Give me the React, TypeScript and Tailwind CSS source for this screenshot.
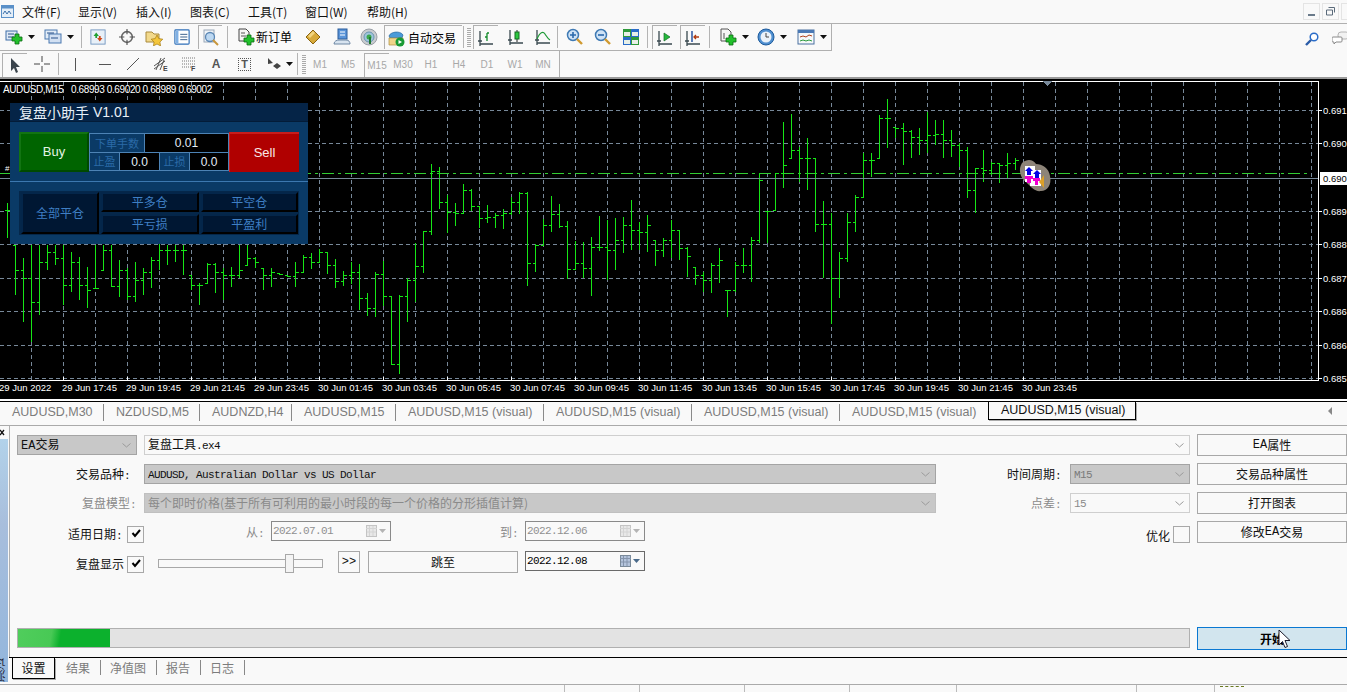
import React from 'react';

const SANS = "font-['Noto_Sans_CJK_SC','Liberation_Sans',sans-serif]";

// [high, low, close], y in page pixels, one bar every 8px from x=7
const bars: number[][] = [
  [203, 238, 210], [245, 295, 270], [258, 322, 278], [245, 342, 302], [245, 315, 262], [245, 270, 252], [245, 265, 258], [245, 305, 285],
  [252, 292, 262], [257, 300, 285], [267, 308, 290], [245, 288, 288], [245, 270, 250], [245, 287, 286], [260, 297, 270], [268, 300, 296],
  [262, 302, 280], [268, 295, 272], [257, 288, 260], [242, 270, 250], [245, 265, 250], [245, 262, 250], [245, 275, 250], [275, 290, 285],
  [283, 305, 285], [263, 283, 264], [263, 293, 272], [268, 300, 275], [267, 287, 275], [245, 278, 270], [245, 265, 258], [257, 268, 262],
  [268, 290, 275], [268, 287, 272], [273, 275, 274], [275, 277, 276], [262, 287, 272],
  [255, 273, 257], [253, 269, 262], [249, 263, 252], [252, 274, 265], [259, 288, 281], [271, 286, 275], [262, 284, 272], [264, 310, 298],
  [293, 316, 308], [272, 317, 274], [261, 306, 296], [296, 365, 364], [295, 374, 296], [278, 322, 280], [243, 302, 266], [231, 273, 231],
  [164, 235, 171], [167, 209, 202], [195, 233, 212], [203, 226, 213], [184, 213, 190], [189, 211, 206], [206, 228, 218], [205, 223, 217],
  [213, 228, 215], [209, 229, 213], [197, 215, 202], [192, 214, 193], [192, 286, 263], [244, 272, 245], [219, 246, 225], [196, 232, 214],
  [204, 228, 226], [221, 279, 269], [241, 269, 263], [242, 278, 268], [237, 296, 247], [216, 251, 247],
  [220, 280, 250], [218, 270, 240], [217, 253, 225], [200, 250, 230], [222, 250, 232], [215, 252, 225], [240, 266, 250], [238, 257, 240],
  [220, 258, 230], [230, 260, 248], [247, 277, 256], [267, 285, 275], [272, 292, 280], [263, 293, 265], [248, 283, 260], [290, 317, 290],
  [262, 292, 265], [248, 273, 265], [237, 282, 240], [173, 243, 180], [211, 243, 211], [173, 210, 173], [122, 188, 165], [114, 158, 150],
  [147, 182, 158], [138, 190, 158], [158, 232, 224], [201, 278, 224], [213, 324, 278], [252, 298, 258], [213, 262, 222], [195, 232, 197],
  [153, 198, 160], [153, 177, 160], [115, 158, 118], [99, 148, 118], [127, 138, 128], [123, 165, 131], [130, 158, 137], [128, 155, 140],
  [112, 153, 135], [120, 145, 134], [120, 158, 140], [130, 157, 145], [143, 167, 150], [147, 198, 190], [168, 213, 168], [150, 182, 170],
  [162, 175, 163], [163, 183, 165], [153, 178, 163], [158, 170, 160],
];

const barPath = bars
  .map(([hi, lo, close], i) => {
    const x = 7.5 + i * 8;
    const prev = i > 0 ? bars[i - 1][2] : close;
    const open = Math.min(lo, Math.max(hi, prev));
    return `M${x} ${hi}V${lo}M${x - 3} ${open + 0.5}H${x}M${x} ${close + 0.5}H${x + 3}`;
  })
  .join('');

const gridY = [110, 143, 211, 244, 278, 311, 345, 378];
const gridX = Array.from({ length: 41 }, (_, i) => 31 + i * 32);
const prices = [
  ['0.691', 110], ['0.690', 143], ['0.689', 211], ['0.688', 244], ['0.687', 278], ['0.686', 311], ['0.686', 345], ['0.685', 378],
] as const;

const timeLabels = Array.from({ length: 16 }, (_, i) => {
  const mins = 17 * 60 + 45 + i * 120;
  const day = mins >= 1440 ? '30' : '29';
  const h = Math.floor(mins / 60) % 24;
  return { x: 62 + i * 64, text: `${day} Jun ${String(h).padStart(2, '0')}:45` };
});

const Chart = () => (
  <svg width="1347" height="320" viewBox="0 79 1347 320" className="block" shapeRendering="crispEdges">
    <rect x="0" y="79" width="1347" height="320" fill="#000" />
    {gridX.map((x) => (
      <path key={x} d={`M${x + 0.5} 82V380`} stroke="#778899" strokeDasharray="4 3" />
    ))}
    {gridY.map((y) => (
      <path key={y} d={`M0 ${y + 0.5}H1318`} stroke="#778899" strokeDasharray="4 3" />
    ))}
    <path d="M0 173.5H1311" stroke="#32cd32" strokeDasharray="12 4 3 4" />
    <path d={barPath} stroke="#16e616" fill="none" />
    <path d="M0 178.5H1318" stroke="#778899" />
    <path d="M0 81.5H1318.5V380.5H0" stroke="#fff" fill="none" />
    <path d="M1043 81h9l-4.500 5z" fill="#778899" />
    {prices.map(([label, y]) => (
      <g key={y}>
        <path d={`M1319 ${y + 0.5}h3`} stroke="#fff" />
        <text x="1323" y={y + 4} fill="#fff" fontSize="9.500" fontFamily="Liberation Sans">{label}</text>
      </g>
    ))}
    <rect x="1320" y="172" width="27" height="13" fill="#fff" />
    <text x="1323" y="182" fill="#000" fontSize="9.500" fontFamily="Liberation Sans">0.690</text>
    <text x="3" y="93" fill="#fff" fontSize="10" letterSpacing="-0.4" fontFamily="Liberation Sans">AUDUSD,M15</text>
    <text x="71" y="93" fill="#fff" fontSize="10" letterSpacing="-0.39" fontFamily="Liberation Sans">0.68993 0.69020 0.68989 0.69002</text>
    <text x="5" y="171" fill="#fff" fontSize="8" fontFamily="Liberation Sans">#</text>
    <text x="-1" y="391" fill="#fff" fontSize="9.500" fontFamily="Liberation Sans">29 Jun 2022</text>
    {timeLabels.map((t) => (
      <g key={t.x}>
        <path d={`M${t.x + 1.5} 377v4`} stroke="#fff" />
        <text x={t.x} y="391" fill="#fff" fontSize="9.500" fontFamily="Liberation Sans">{t.text}</text>
      </g>
    ))}
    {/* tester arrow marker, last bar */}
    <g shapeRendering="auto">
      <path d="M1022 163c6-5 11-3 14 1 6 0 13 4 14 12 2 9-3 15-9 15-6 1-10-4-15-9-6-4-8-13-4-19z" fill="#8d8478" />
      <path d="M1025 166h10v4h6v16h-11v-4h-5z" fill="#fff" />
      <path d="M1029 167l4 4h-2v4h-4v-4h-2zM1037 170l4 4h-2v4h-4v-4h-2z" fill="#0000e6" />
      <path d="M1025 176h8v3h-2v4h-4v-4h-2zM1033 178h7v3h-2v4h-3v-4h-2z" fill="#f000d0" />
      <path d="M1044 175v13l-5-6z" fill="#dca028" />
    </g>
  </svg>
);

const Arrow = () => (
  <svg width="7" height="4" viewBox="0 0 7 4"><path d="M0 0h7L3.500 4z" fill="#111" /></svg>
);

const Sep = ({ className = '' }: { className?: string }) => <div className={`w-px h-[22px] bg-[#b4b4b4] shrink-0 ${className}`} />;

const Plus = ({ x, y }: { x: number; y: number }) => (
  <path d={`M${x + 3} ${y}h4v3h3v4h-3v3h-4v-3h-3v-4h3z`} fill="#22c02c" stroke="#0a6a12" strokeWidth="0.8" />
);

const WinIcon = ({ children, s = 18 }: { children: React.ReactNode; s?: number }) => (
  <svg width={s} height={s} viewBox="0 0 18 18" className="shrink-0">{children}</svg>
);

const ChartAxes = () => <path d="M3 2v13h13M1 12h4M3 15v2" stroke="#3a4a50" strokeWidth="1.300" fill="none" />;

const Toolbar1 = () => (
  <div className="h-[27px] w-[832px] flex items-center pl-[5px] border-b border-r border-[#b0b0b0]">
    <WinIcon><rect x="1" y="3" width="11" height="9" fill="#dfe9f5" stroke="#3f6ea8" /><path d="M3 6h6M3 9h6" stroke="#28508a" /><Plus x={7} y={6} /></WinIcon>
    <div className="w-[16px] flex justify-center"><Arrow /></div>
    <div className="ml-[5px]"><WinIcon><rect x="1" y="2" width="12" height="9" fill="#e2ecf7" stroke="#4a78b0" /><rect x="5" y="6" width="12" height="9" fill="#d2e0f2" stroke="#4a78b0" /><path d="M3 5h7M7 10h7" stroke="#28508a" /></WinIcon></div>
    <div className="w-[16px] flex justify-center"><Arrow /></div>
    <Sep className="ml-[3px]" />
    <div className="ml-[8px]"><WinIcon s={16}><rect x="1" y="1" width="16" height="16" fill="#e8f0f8" stroke="#6f94bf" /><path d="M4 8l3-4 3 4H8v2H6V8z" fill="#20a030" /><path d="M14 10l-3 4-3-4h2V8h2v2z" fill="#d04818" /></WinIcon></div>
    <div className="ml-[13px]"><WinIcon s={16}><circle cx="9" cy="9" r="6" fill="none" stroke="#666" strokeWidth="1.800" /><path d="M9 0v6M9 12v6M0 9h6M12 9h6" stroke="#555" strokeWidth="1.300" /></WinIcon></div>
    <div className="ml-[10px]"><WinIcon><path d="M1 4h6l2 2h5v8H1z" fill="#f2d98c" stroke="#a98a3c" /><path d="M12 7l1.800 3.600 4 .6-2.900 2.800.7 3.900-3.600-1.900-3.600 1.900.7-3.900L6.200 11.200l4-.6z" fill="#f4c63c" stroke="#a47a14" strokeWidth="0.700" /></WinIcon></div>
    <div className="ml-[11px]"><WinIcon s={16}><rect x="1" y="1" width="16" height="16" rx="1" fill="#fff" stroke="#2f6fb8" strokeWidth="1.300" /><rect x="2" y="2" width="3" height="14" fill="#7fb0e4" /><path d="M7 6h8M7 9h8M7 12h8" stroke="#27507f" /></WinIcon></div>
    <div className="ml-[8px] w-[24px] h-[24px] border-l border-t border-[#b0b0b0] flex items-center justify-center"><WinIcon><rect x="2" y="1" width="10" height="12" fill="#eef3f8" stroke="#9aa8b8" /><circle cx="8" cy="8" r="4.500" fill="#bcd8f2" stroke="#5a86b4" strokeWidth="1.300" /><path d="M11 11l5 5" stroke="#c8963c" strokeWidth="2" /></WinIcon></div>
    <Sep className="ml-[5px]" />
    <div className="ml-[9px]"><WinIcon><path d="M2 1h7l3 3v9H2z" fill="#f6f6f6" stroke="#444" /><path d="M4 5h4M4 8h5" stroke="#555" /><Plus x={7} y={7} /></WinIcon></div>
    <span className={`ml-[1px] w-[36px] text-[12px] leading-none text-black whitespace-nowrap ${SANS}`}>新订单</span>
    <div className="ml-[12px]"><WinIcon><path d="M2 9l7-7 7 7-7 7z" fill="#d8aa3a" stroke="#8a6410" /><path d="M4 8l5-5 2 2-5 5z" fill="#f2d47e" /></WinIcon></div>
    <div className="ml-[11px]"><WinIcon><rect x="5" y="1" width="9" height="10" fill="#5a94d8" stroke="#2a5c9c" /><path d="M7 4h5M7 7h5" stroke="#fff" /><path d="M1 16c0-3 3-4 5-4h7c3 0 4 2 4 4z" fill="#d8e4f0" stroke="#6f88a4" /></WinIcon></div>
    <div className="ml-[9px]"><WinIcon><circle cx="9" cy="9" r="8" fill="#c8ccd0" stroke="#9aa0a6" /><circle cx="9" cy="9" r="5" fill="#9fc4dc" stroke="#6a94b0" /><circle cx="9" cy="9" r="2.500" fill="#3aa84a" /><path d="M10 9v7" stroke="#1e7a30" strokeWidth="2" /></WinIcon></div>
    <div className="ml-[6px] h-[24px] w-[78px] border-l border-t border-[#b0b0b0] flex items-center pl-[2px]">
      <WinIcon><path d="M2 7c1-4 11-6 14-1l-1 3H3z" fill="#4a9ad8" stroke="#2a68a0" strokeWidth="0.700" /><path d="M2 9h14v7H2z" fill="#f0d48a" stroke="#b09040" strokeWidth="0.700" /><circle cx="13" cy="13" r="4.500" fill="#189a34" /><path d="M11.500 11v4l3.500-2z" fill="#fff" /></WinIcon>
      <span className={`ml-[3px] text-[12px] leading-none text-black whitespace-nowrap ${SANS}`}>自动交易</span>
    </div>
    <Sep className="ml-[1px]" />
    <div className="ml-[3px] w-[4px] h-[20px] bg-[repeating-linear-gradient(0deg,#aaa_0,#aaa_1px,transparent_1px,transparent_2px)]" />
    <div className="ml-[2px] w-[25px] h-[24px] border-l border-t border-[#b0b0b0] flex items-center justify-center"><WinIcon><ChartAxes /><path d="M10 4v8M8 8h2M10 4h2" stroke="#138a2a" strokeWidth="1.300" fill="none" /></WinIcon></div>
    <div className="ml-[9px]"><WinIcon><ChartAxes /><path d="M10 2v12" stroke="#222" /><rect x="8" y="4" width="4" height="7" fill="#2cc840" stroke="#146a22" /></WinIcon></div>
    <div className="ml-[9px]"><WinIcon><ChartAxes /><path d="M3 11c3-7 6-8 8-5s3 5 5 6" stroke="#1e9a36" strokeWidth="1.200" fill="none" /></WinIcon></div>
    <Sep className="ml-[5px]" />
    <div className="ml-[8px]"><WinIcon><circle cx="7" cy="7" r="5.500" fill="#cfe3f6" stroke="#3f7ab4" strokeWidth="1.500" /><path d="M4 7h6M7 4v6" stroke="#2a69ac" strokeWidth="1.600" /><path d="M11 11l5 5" stroke="#d09a30" strokeWidth="2.400" /></WinIcon></div>
    <div className="ml-[10px]"><WinIcon><circle cx="7" cy="7" r="5.500" fill="#cfe3f6" stroke="#3f7ab4" strokeWidth="1.500" /><path d="M4 7h6" stroke="#2a69ac" strokeWidth="1.600" /><path d="M11 11l5 5" stroke="#d09a30" strokeWidth="2.400" /></WinIcon></div>
    <div className="ml-[10px]"><WinIcon><rect x="1" y="1" width="8" height="8" fill="#2f9a3c" /><rect x="9" y="1" width="8" height="8" fill="#2a6cc8" /><rect x="1" y="9" width="8" height="8" fill="#2a6cc8" /><rect x="9" y="9" width="8" height="8" fill="#2f9a3c" /><path d="M2 4h6v4H2zM10 4h6v4h-6zM2 12h6v4H2zM10 12h6v4h-6z" fill="#e8f0e8" /></WinIcon></div>
    <Sep className="ml-[7px]" />
    <div className="ml-[4px] w-[25px] h-[24px] border-l border-t border-[#b0b0b0] flex items-center justify-center"><WinIcon><ChartAxes /><path d="M8 4l6 4-6 4z" fill="#24b83c" stroke="#146a22" strokeWidth="0.700" /></WinIcon></div>
    <div className="ml-[3px] w-[25px] h-[24px] border-l border-t border-[#b0b0b0] flex items-center justify-center"><WinIcon><ChartAxes /><path d="M8 2v11" stroke="#1c4a9c" strokeWidth="1.400" /><path d="M15 8H10M12 6l-2 2 2 2" stroke="#b03a10" strokeWidth="1.300" fill="none" /></WinIcon></div>
    <Sep className="ml-[4px]" />
    <div className="ml-[9px]"><WinIcon><path d="M2 1h7l3 3v9H2z" fill="#f6f6f6" stroke="#555" /><path d="M5 5v6" stroke="#555" /><Plus x={7} y={7} /></WinIcon></div>
    <div className="w-[16px] flex justify-center"><Arrow /></div>
    <div className="ml-[4px]"><WinIcon><circle cx="9" cy="9" r="8" fill="#4f8fd0" stroke="#1c5a9c" /><circle cx="9" cy="9" r="5.500" fill="#eaf2fa" /><path d="M9 5v4h3" stroke="#444" fill="none" /></WinIcon></div>
    <div className="w-[16px] flex justify-center"><Arrow /></div>
    <div className="ml-[6px]"><WinIcon><rect x="1" y="2" width="16" height="14" fill="#f6f8fa" stroke="#4a70a0" /><rect x="1" y="2" width="16" height="3" fill="#4a78b4" /><path d="M3 9l3-1 3 1 3-2 3 1" stroke="#b0401c" fill="none" /><path d="M3 13l3-1 3 1 3-1 3 1" stroke="#2a9a3c" fill="none" /></WinIcon></div>
    <div className="w-[16px] flex justify-center"><Arrow /></div>
  </div>
);

const Timeframe = ({ label, w = 'w-[28px]' }: { label: string; w?: string }) => (
  <div className={`${w} text-center text-[10px] text-[#a8a8a8] font-['Liberation_Sans',sans-serif]`}>{label}</div>
);

const Toolbar2 = () => (
  <div className="h-[26px] w-[560px] flex items-center pl-[2px] border-r border-[#b0b0b0]">
    <div className="w-[25px] h-[24px] border-l border-t border-[#b0b0b0] flex items-center justify-center mt-[1px]">
      <svg width="10" height="15" viewBox="0 0 10 15"><path d="M1 0v13l3-3 2 5 2-1-2-5h4z" fill="#3a444c" /></svg>
    </div>
    <div className="ml-[7px]"><svg width="16" height="16" viewBox="0 0 16 16"><path d="M8 0v6M8 10v6M0 8h6M10 8h6" stroke="#444" /></svg></div>
    <Sep className="ml-[8px]" />
    <div className="ml-[16px] w-px h-[13px] bg-[#555]" />
    <div className="ml-[23px] w-[12px] h-px bg-[#555]" />
    <div className="ml-[15px]"><svg width="14" height="14" viewBox="0 0 14 14"><path d="M1 13L13 1" stroke="#555" /></svg></div>
    <div className="ml-[13px]"><svg width="16" height="16" viewBox="0 0 16 16"><path d="M1 10L12 2M1 13L12 5M3 14L8 2M7 14l4-10" stroke="#555" /><text x="10" y="15" fontSize="7" fontWeight="700" fill="#444" fontFamily="Liberation Sans">E</text></svg></div>
    <div className="ml-[12px]"><svg width="16" height="16" viewBox="0 0 16 16"><path d="M1 2h13M1 5h13M1 8h13M1 11h9" stroke="#777" strokeDasharray="1 1" /><text x="10" y="15" fontSize="7" fontWeight="700" fill="#444" fontFamily="Liberation Sans">F</text></svg></div>
    <div className="ml-[11px] w-[16px] text-center text-[12px] font-bold text-[#555] font-['Liberation_Sans',sans-serif]">A</div>
    <div className="ml-[14px] w-[13px] h-[13px] border border-dotted border-[#555] flex items-center justify-center text-[11px] font-bold text-[#555] leading-none font-['Liberation_Sans',sans-serif]">T</div>
    <div className="ml-[16px]"><svg width="14" height="14" viewBox="0 0 14 14"><path d="M1 1l5 5-5 1zM6 9l4-3 4 3-4 3z" fill="#444" /></svg></div>
    <div className="ml-[5px]"><Arrow /></div>
    <Sep className="ml-[4px]" />
    <div className="ml-[4px] w-[4px] h-[20px] bg-[repeating-linear-gradient(0deg,#aaa_0,#aaa_1px,transparent_1px,transparent_2px)]" />
    <div className="flex items-center">
      <Timeframe label="M1" />
      <Timeframe label="M5" />
      <div className="ml-[2px] w-[25px] h-[24px] border-l border-t border-[#b0b0b0] flex items-center justify-center mt-[1px]"><Timeframe label="M15" w="w-[25px]" /></div>
      <Timeframe label="M30" />
      <Timeframe label="H1" />
      <Timeframe label="H4" />
      <Timeframe label="D1" />
      <Timeframe label="W1" />
      <Timeframe label="MN" />
    </div>
  </div>
);

const MenuBar = () => {
  const items = [
    ['文件(F)', 'w-[56px]'], ['显示(V)', 'w-[58px]'], ['插入(I)', 'w-[54px]'], ['图表(C)', 'w-[58px]'],
    ['工具(T)', 'w-[57px]'], ['窗口(W)', 'w-[62px]'], ['帮助(H)', 'w-[60px]'],
  ];
  return (
    <div className="h-[24px] flex items-center border-b border-[#b0b0b0]">
      <div className="w-[22px] pl-[1px]">
        <svg width="13" height="13" viewBox="0 0 13 13"><rect x="0.500" y="0.500" width="12" height="12" fill="#e4eef8" stroke="#5a90c8" /><rect x="0.500" y="0.500" width="12" height="3" fill="#5a90c8" /><path d="M2 9l2-3 2 3 2-3 2 3" stroke="#3a6ea8" fill="none" /></svg>
      </div>
      {items.map(([label, w]) => (
        <div key={label} className={`${w} text-[12px] leading-none text-[#111] ${SANS}`}>{label}</div>
      ))}
      <div className="ml-auto flex gap-[2px]">
        <div className="w-[17px] h-[17px] border border-[#e4e4e4] flex items-end justify-center pb-[3px]"><div className="w-[7px] h-[2px] bg-[#6a7a8a]" /></div>
        <div className="w-[17px] h-[17px] border border-[#e4e4e4] flex items-center justify-center">
          <svg width="9" height="9" viewBox="0 0 9 9"><path d="M2.500.500h6v5M.500 3h6v5h-6z" stroke="#5a6a7a" fill="none" /></svg>
        </div>
        <div className="w-[6px] h-[17px] border-y border-l border-[#e4e4e4]" />
      </div>
    </div>
  );
};

const TopBars = () => (
  <div className="relative h-[55px] border-b-2 border-[#9a9a9a]">
    <Toolbar1 />
    <Toolbar2 />
    <div className="absolute right-0 top-[7px] flex items-center">
      <svg width="14" height="14" viewBox="0 0 14 14" className="mr-[13px]"><circle cx="9" cy="5" r="3.800" fill="#fff" stroke="#2a6cc8" strokeWidth="1.500" /><path d="M6 8l-5 5" stroke="#2a5ca8" strokeWidth="2.400" /></svg>
      <svg width="15" height="15" viewBox="0 0 15 15"><rect x="6" y="1" width="11" height="7" rx="3" fill="#f2f2f2" stroke="#b4b4b4" /><path d="M1 6h8a1 1 0 011 1v3a1 1 0 01-1 1H4l-2 2v-2H1a1 1 0 01-1-1V7a1 1 0 011-1z" fill="#fff" stroke="#8a8a8a" /></svg>
    </div>
  </div>
);

const Cell = ({ children, className = '' }: { children: React.ReactNode; className?: string }) => (
  <div className={`flex items-center justify-center border border-[#4d83b5] ${className}`}>{children}</div>
);

const FlatBtn = ({ label, className = '' }: { label: string; className?: string }) => (
  <div className={`flex items-center justify-center bg-[#001733] border-l-2 border-t-2 border-r-2 border-b-2 border-l-[#04264a] border-t-[#04264a] border-r-black border-b-black text-[12px] text-[#3f7fc4] ${SANS} ${className}`}>{label}</div>
);

const HelperPanel = () => (
  <div className={`absolute left-[10px] top-[24px] w-[298px] h-[141px] bg-[#0a3a66] flex flex-col ${SANS}`}>
    <div className="h-[19px] bg-[#052447] border-b border-[#031c38] pl-[9px] flex items-center text-[14px] leading-none text-[#e8f0f8]">
      复盘小助手 <span className="ml-[4px] font-['Liberation_Sans',sans-serif]">V1.01</span>
    </div>
    <div className="h-[59px] pt-[10px] pl-[9px] flex">
      <div className="w-[70px] h-[40px] bg-[#006400] border-2 border-t-[#127412] border-l-[#127412] border-r-[#004a00] border-b-[#004a00] flex items-center justify-center text-[13px] text-[#e4f4e4] font-['Liberation_Sans',sans-serif]">Buy</div>
      <div className="w-[140px] h-[40px] pt-[1px] flex flex-col">
        <div className="flex h-[20px]">
          <Cell className="w-[56px] text-[11px] text-[#2a6aa6]">下单手数</Cell>
          <Cell className="w-[85px] -ml-px bg-black text-[12px] text-[#e4eef8] font-['Liberation_Sans',sans-serif]">0.01</Cell>
        </div>
        <div className="flex h-[19px] -mt-px">
          <Cell className="w-[31px] text-[11px] text-[#2a6aa6]">止盈</Cell>
          <Cell className="w-[41px] -ml-px bg-black text-[12px] text-[#e4eef8] font-['Liberation_Sans',sans-serif]">0.0</Cell>
          <Cell className="w-[31px] -ml-px text-[11px] text-[#2a6aa6]">止损</Cell>
          <Cell className="w-[40px] -ml-px bg-black text-[12px] text-[#e4eef8] font-['Liberation_Sans',sans-serif]">0.0</Cell>
        </div>
      </div>
      <div className="w-[70px] h-[40px] bg-[#b00000] border-t-2 border-l border-t-[#c81c1c] border-l-[#c81c1c] flex items-center justify-center text-[13px] text-[#f8e8e8] font-['Liberation_Sans',sans-serif]">Sell</div>
    </div>
    <div className="h-px bg-[#3c78b0]" />
    <div className="ml-[9px] mt-[9px] w-[280px] h-[44px] bg-[#05274a] flex p-[1px] pl-[2px] gap-[2px]">
      <FlatBtn label="全部平仓" className="w-[78px]" />
      <div className="flex-1 grid grid-cols-2 grid-rows-2 gap-[2px]">
        <FlatBtn label="平多仓" />
        <FlatBtn label="平空仓" />
        <FlatBtn label="平亏损" />
        <FlatBtn label="平盈利" />
      </div>
    </div>
  </div>
);

const chartTabs = [
  ['AUDUSD,M30', 'w-[104px]'], ['NZDUSD,M5', 'w-[96px]'], ['AUDNZD,H4', 'w-[92px]'], ['AUDUSD,M15', 'w-[104px]'],
  ['AUDUSD,M15 (visual)', 'w-[148px]'], ['AUDUSD,M15 (visual)', 'w-[148px]'], ['AUDUSD,M15 (visual)', 'w-[148px]'],
];

const TabStrip = () => (
  <div className="relative h-[25px] border-t border-black border-b border-b-[#aaa] flex items-start font-['Liberation_Sans',sans-serif] text-[12.500px] leading-none">
    {chartTabs.map(([label, w], i) => (
      <div key={i} className={`${w} h-[17px] mt-[2px] pl-[12px] border-r border-[#8a8a8a] text-[#7c7c7c] flex items-center whitespace-nowrap`}>{label}</div>
    ))}
    <div className="w-[148px] h-[17px] mt-[2px] pl-[12px] text-[#7c7c7c] flex items-center whitespace-nowrap">AUDUSD,M15 (visual)</div>
    <div className="w-[148px] h-[18px] pl-[12px] border-x border-b border-black shadow-[1px_1px_0_#aaa] text-[#111] bg-[#f9f9f9] flex items-center whitespace-nowrap">AUDUSD,M15 (visual)</div>
    <div className="absolute right-[15px] top-[5px] w-0 h-0 border-y-[4px] border-r-[4px] border-y-transparent border-r-[#888]" />
  </div>
);

const Mono = ({ children }: { children: React.ReactNode }) => (
  <span className="font-['Liberation_Mono',monospace] text-[11px] tracking-[-0.6px]">{children}</span>
);

const Ea = () => <span className="font-['Liberation_Mono',monospace] text-[12px]">EA</span>;

const Chevron = ({ color = '#9a9a9a' }: { color?: string }) => (
  <svg width="9" height="5" viewBox="0 0 9 5" className="shrink-0"><path d="M.5.500l4 3.500 4-3.500" stroke={color} fill="none" /></svg>
);

const Select = ({ children, className = '' }: { children: React.ReactNode; className?: string }) => (
  <div className={`mt-px h-[20px] flex items-center pl-[3px] pr-[5px] border leading-none whitespace-nowrap ${className}`}>
    <div className="flex-1 min-w-0">{children}</div>
    <Chevron />
  </div>
);

const Btn = ({ label, className = '' }: { label: React.ReactNode; className?: string }) => (
  <div className={`h-[22px] flex items-center justify-center border border-[#a8a8a8] text-[12px] leading-none text-[#111] ${className}`}>{label}</div>
);

const CheckBox = ({ checked = false }: { checked?: boolean }) => (
  <div className="w-[17px] h-[17px] border border-[#a8a8a8] flex items-start justify-center pt-[2px] shrink-0">
    {checked && <svg width="10" height="9" viewBox="0 0 10 9"><path d="M1.500 4l2.500 3 5-6" stroke="#000" strokeWidth="2" fill="none" /></svg>}
  </div>
);

const Calendar = ({ active = false }: { active?: boolean }) => (
  <div className="flex items-center gap-[2px] shrink-0">
    <svg width="11" height="12" viewBox="0 0 11 12">
      <rect x="0.500" y="0.500" width="10" height="11" fill={active ? '#b4c4dc' : '#e8e8e8'} stroke={active ? '#7a8a9a' : '#c4c4c4'} />
      <path d="M0 3.500h11M3.500 1v10M7 1v10M1 7h9" stroke={active ? '#8494ac' : '#d4d4d4'} />
    </svg>
    <svg width="7" height="4" viewBox="0 0 7 4"><path d="M0 0h7L3.500 4z" fill={active ? '#4a6a8a' : '#b4b4b4'} /></svg>
  </div>
);

const DateBox = ({ value, active = false, className = '' }: { value: string; active?: boolean; className?: string }) => (
  <div className={`w-[120px] h-[20px] border flex items-center justify-between pl-px pr-[4px] ${active ? 'border-[#6a6a6a] text-black' : 'border-[#8a8a8a] text-[#909090]'} ${className}`}>
    <Mono>{value}</Mono>
    <Calendar active={active} />
  </div>
);

const TesterForm = () => (
  <div className={`h-[231px] border-l border-[#b0b0b0] pl-[7px] pt-[8px] text-[12px] text-[#111] ${SANS}`}>
    <div className="flex h-[22px]">
      <Select className="w-[120px] bg-[#c8c8c8] border-[#a4a4a4] text-[12px]"><Ea />交易</Select>
      <Select className="ml-[7px] w-[1046px] border-[#cfcfcf] text-[12px]">复盘工具<Mono>.ex4</Mono></Select>
      <Btn label={<><Ea />属性</>} className="ml-[7px] w-[150px]" />
    </div>
    <div className="flex h-[22px] mt-[7px]">
      <div className="w-[127px] pr-[14px] text-right leading-[22px]">交易品种<Mono>:</Mono></div>
      <Select className="w-[792px] bg-[#c8c8c8] border-[#a4a4a4]"><Mono>AUDUSD, Australian Dollar vs US Dollar</Mono></Select>
      <div className="w-[134px] pr-[9px] text-right leading-[22px]">时间周期<Mono>:</Mono></div>
      <Select className="w-[120px] bg-[#c8c8c8] border-[#a4a4a4] text-[#7a7a7a]"><Mono>M15</Mono></Select>
      <Btn label="交易品种属性" className="ml-[7px] w-[150px]" />
    </div>
    <div className="flex h-[22px] mt-[7px] text-[#8a8a8a]">
      <div className="w-[127px] pr-[8px] text-right leading-[22px]">复盘模型<Mono>:</Mono></div>
      <Select className="w-[792px] bg-[#c8c8c8] border-[#c0c0c0]">每个即时价格(基于所有可利用的最小时段的每一个价格的分形插值计算)</Select>
      <div className="w-[134px] pr-[9px] text-right leading-[22px]">点差<Mono>:</Mono></div>
      <Select className="w-[120px] border-[#cfcfcf]"><Mono>15</Mono></Select>
      <Btn label="打开图表" className="ml-[7px] w-[150px]" />
    </div>
    <div className="flex h-[22px] mt-[7px]">
      <div className="w-[110px] pr-[5px] text-right leading-[26px]">适用日期<Mono>:</Mono></div>
      <div className="mt-[5px]"><CheckBox checked /></div>
      <div className="ml-[102px] w-[25px] text-[#8a8a8a] leading-[22px]">从<Mono>:</Mono></div>
      <DateBox value="2022.07.01" />
      <div className="ml-[109px] w-[25px] text-[#8a8a8a] leading-[22px]">到<Mono>:</Mono></div>
      <DateBox value="2022.12.06" />
      <div className="ml-[501px] w-[27px] leading-[30px]">优化</div>
      <div className="mt-[5px]"><CheckBox /></div>
      <Btn label={<>修改<Ea />交易</>} className="ml-[7px] w-[150px]" />
    </div>
    <div className="flex h-[22px] mt-[8px]">
      <div className="w-[110px] pr-[3px] text-right leading-[26px]">复盘显示</div>
      <div className="mt-[5px]"><CheckBox checked /></div>
      <div className="relative ml-[14px] mt-[8px] w-[165px] h-[9px] border border-[#a8a8a8]">
        <div className="absolute left-[126px] -top-[6px] w-[9px] h-[19px] border border-[#a8a8a8] bg-[#f4f4f4]" />
      </div>
      <Btn label=">>" className="ml-[15px] w-[22px] font-['Liberation_Mono',monospace]" />
      <Btn label="跳至" className="ml-[8px] w-[150px]" />
      <DateBox value="2022.12.08" active className="ml-[7px]" />
    </div>
    <div className="flex mt-[54px]">
      <div className="mt-px w-[1173px] h-[20px] bg-[#e3e3e3] border border-[#b0b0b0]">
        <div className="w-[92px] h-full bg-[linear-gradient(100deg,#50cd5c_0%,#48c955_36%,#0cb12d_46%,#0cb12d_100%)]" />
      </div>
      <div className="relative ml-[7px] w-[150px] h-[23px] bg-[#d2e5ee] border-[1.500px] border-[#0a78d2] flex items-center justify-center font-bold text-[12px] text-black">
        开始
        <svg width="13" height="20" viewBox="0 0 13 20" className="absolute left-[80px] top-px">
          <path d="M1 1v15l3.500-3.500 2.500 6 2.500-1-2.500-6h5z" fill="#fff" stroke="#1a1a2a" />
        </svg>
      </div>
    </div>
  </div>
);

const BottomTabs = () => (
  <div className={`h-[27px] border-t border-black flex items-start text-[12px] leading-none text-[#7c7c7c] ${SANS}`}>
    <div className="ml-[3px] w-[43px] h-[21px] border-x border-b border-black shadow-[1px_1px_0_#aaa] bg-[#f9f9f9] text-[#111] flex items-center justify-center">设置</div>
    <div className="ml-[11px] w-[35px] h-[15px] mt-[2px] border-r border-[#888] flex items-center">结果</div>
    <div className="ml-[9px] w-[47px] h-[15px] mt-[2px] border-r border-[#888] flex items-center">净值图</div>
    <div className="ml-[9px] w-[35px] h-[15px] mt-[2px] border-r border-[#888] flex items-center">报告</div>
    <div className="ml-[9px] w-[35px] h-[15px] mt-[2px] border-r border-[#888] flex items-center">日志</div>
  </div>
);

const LeftStrip = () => (
  <div className="w-[9px] shrink-0 flex flex-col pb-[2px]">
    <div className="h-[13px] flex items-center">
      <svg width="5" height="7" viewBox="0 0 5 7"><path d="M0 1l4 5M4 1L0 6" stroke="#111" strokeWidth="1.300" /></svg>
    </div>
    <div className={`flex-1 w-[8px] overflow-hidden flex flex-col justify-end bg-[linear-gradient(180deg,#b2d2ea_0%,#a8bedc_35%,#92b6dc_100%)] text-[12px] text-[#223] ${SANS}`}>
      <div className="-ml-[6px] pb-[1px] leading-none [writing-mode:vertical-rl] rotate-180 whitespace-nowrap">测试</div>
    </div>
  </div>
);

const StatusBar = () => (
  <div className="h-[7px] flex">
    <div className="w-[565px] border-r border-[#bbb]" />
    <div className="w-[75px] border-r border-[#bbb]" />
    <div className="w-[105px] border-r border-[#bbb]" />
    <div className="w-[105px] border-r border-[#bbb]" />
    <div className="w-[107px] border-r border-[#bbb]" />
    <div className="w-[180px] border-r border-[#bbb]" />
    <div className="w-[78px] border-r border-[#bbb]" />
    <div className="ml-[5px] mt-[1px] w-[24px] h-[2px] border-t border-dashed border-[#6a7a20]" />
  </div>
);

export default function App() {
  return (
    <div className="w-[1347px] h-[692px] overflow-hidden bg-[#f9f9f9] flex flex-col">
      <MenuBar />
      <TopBars />
      <div className="relative h-[322px] bg-black">
        <Chart />
        <div className="h-[2px] bg-white" />
        <HelperPanel />
      </div>
      <TabStrip />
      <div className="flex h-[259px] border-b border-[#aaa]">
        <LeftStrip />
        <div className="flex-1 min-w-0 flex flex-col">
          <TesterForm />
          <BottomTabs />
        </div>
      </div>
      <StatusBar />
    </div>
  );
}
